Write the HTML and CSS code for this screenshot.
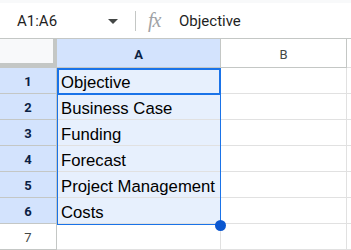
FILE: index.html
```
<!DOCTYPE html>
<html lang="en">

<head>
    <meta charset="UTF-8">
    <meta name="viewport" content="width=device-width, initial-scale=1.0">
    <title>Hoja</title>
    <link rel="stylesheet" href="styles.css">
</head>

<body>
    <div class="barra">
        <div class="nombreRango">A1:A6</div>
        <svg class="flecha" width="10" height="5" viewBox="0 0 10 5">
            <path d="M0 0 L10 0 L5 5 Z" fill="#444746" />
        </svg>
        <div class="separador"></div>
        <span class="fx">fx</span>
        <div class="formula">Objective</div>
    </div>

    <div class="hoja">
        <div class="esquina"></div>
        <div class="colHead sel">A</div>
        <div class="colHead">B</div>
        <div class="resto"></div>

        <div class="rowHead sel">1</div>
        <div class="celda sel">Objective</div>
        <div class="celda"></div>
        <div class="resto"></div>

        <div class="rowHead sel">2</div>
        <div class="celda sel">Business Case</div>
        <div class="celda"></div>
        <div class="resto"></div>

        <div class="rowHead sel">3</div>
        <div class="celda sel">Funding</div>
        <div class="celda"></div>
        <div class="resto"></div>

        <div class="rowHead sel">4</div>
        <div class="celda sel">Forecast</div>
        <div class="celda"></div>
        <div class="resto"></div>

        <div class="rowHead sel">5</div>
        <div class="celda sel">Project Management</div>
        <div class="celda"></div>
        <div class="resto"></div>

        <div class="rowHead sel">6</div>
        <div class="celda sel">Costs</div>
        <div class="celda"></div>
        <div class="resto"></div>

        <div class="rowHead">7</div>
        <div class="celda"></div>
        <div class="celda"></div>
        <div class="resto"></div>

        <div class="rango"></div>
        <div class="activa"></div>
        <div class="punto"></div>
    </div>
</body>

</html>
```

FILE: styles.css
```
body {
    margin: 0;
    background: white;
    font-family: 'Roboto', sans-serif;
    overflow: hidden;
}

.barra {
    height: 39px;
    border-top: 3px solid #f8f9fa;
    box-sizing: border-box;
    border-bottom: 1px solid #c4c7c5;
    display: flex;
    align-items: center;
    color: #1f1f1f;
    font-size: 15px;
}

.nombreRango {
    width: 91px;
    padding-left: 17px;
    box-sizing: border-box;
}

.flecha {
    margin-left: 17px;
    margin-top: 1px;
}

.separador {
    width: 1px;
    height: 20px;
    background: #c4c7c5;
    margin-left: 17px;
}

.fx {
    margin-left: 12px;
    width: 21px;
    color: #a0a3a6;
    font-family: 'Liberation Serif', serif;
    font-style: italic;
    font-size: 20px;
    letter-spacing: -1px;
}

.formula {
    margin-left: 10px;
}

.hoja {
    position: relative;
    display: grid;
    grid-template-columns: 57px 164px 126px 1fr;
    grid-template-rows: 29px repeat(7, 26px);
    font-family: 'Liberation Sans', Arial, sans-serif;
}

.esquina {
    background: #f8f9fa;
    border-right: 4px solid #c4c7c5;
    border-bottom: 5px solid #c4c7c5;
}

.colHead {
    border-right: 1px solid #c4c7c5;
    border-bottom: 1px solid #c4c7c5;
    display: flex;
    align-items: center;
    justify-content: center;
    font-family: 'Roboto', sans-serif;
    font-size: 13px;
    color: #444746;
    padding-top: 2px;
    box-sizing: border-box;
}

.rowHead {
    border-right: 1px solid #c4c7c5;
    border-bottom: 1px solid #c4c7c5;
    display: flex;
    align-items: center;
    justify-content: center;
    font-family: 'Roboto', sans-serif;
    font-size: 13px;
    color: #444746;
    padding-top: 2px;
    box-sizing: border-box;
}

.colHead.sel,
.rowHead.sel {
    background: #d3e3fd;
    color: #0b1f44;
    font-weight: bold;
}

.celda {
    border-right: 1px solid #e1e1e1;
    border-bottom: 1px solid #e1e1e1;
    padding-left: 4px;
    box-sizing: border-box;
    display: flex;
    align-items: flex-end;
    font-size: 16.7px;
    color: #000;
    white-space: nowrap;
}

.celda.sel {
    background: #e7f0fd;
}

.resto {
    border-bottom: 1px solid #e1e1e1;
}

.rango {
    position: absolute;
    left: 57px;
    top: 29px;
    width: 164px;
    height: 157px;
    box-sizing: border-box;
    border: 1px solid #1a73e8;
}

.activa {
    position: absolute;
    left: 57px;
    top: 29px;
    width: 164px;
    height: 27px;
    box-sizing: border-box;
    border: 2px solid #1a73e8;
}

.punto {
    position: absolute;
    left: 215px;
    top: 181px;
    width: 11px;
    height: 11px;
    border-radius: 50%;
    background: #0b57d0;
}
```
